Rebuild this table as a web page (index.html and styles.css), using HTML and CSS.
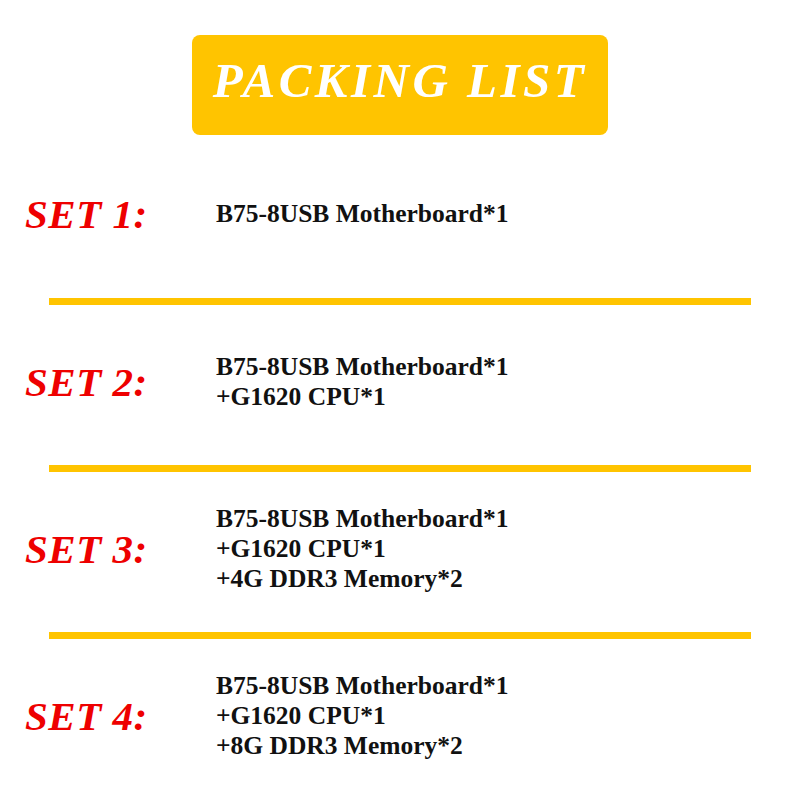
FILE: index.html
```html
<!DOCTYPE html>
<html>
<head>
<meta charset="utf-8">
<link rel="stylesheet" href="styles.css">
</head>
<body>
<div class="header">
  <div class="banner">PACKING LIST</div>
</div>
<div class="set set-first">
  <div class="label">SET 1:</div>
  <div class="items">
    <div>B75-8USB Motherboard*1</div>
  </div>
</div>
<div class="divider"></div>
<div class="set">
  <div class="label">SET 2:</div>
  <div class="items">
    <div>B75-8USB Motherboard*1</div>
    <div>+G1620 CPU*1</div>
  </div>
</div>
<div class="divider"></div>
<div class="set">
  <div class="label">SET 3:</div>
  <div class="items">
    <div>B75-8USB Motherboard*1</div>
    <div>+G1620 CPU*1</div>
    <div>+4G DDR3 Memory*2</div>
  </div>
</div>
<div class="divider"></div>
<div class="set set-last">
  <div class="label">SET 4:</div>
  <div class="items">
    <div>B75-8USB Motherboard*1</div>
    <div>+G1620 CPU*1</div>
    <div>+8G DDR3 Memory*2</div>
  </div>
</div>
</body>
</html>
```
FILE: styles.css
```css
html, body {
  margin: 0;
  padding: 0;
  background: #ffffff;
}
body {
  width: 800px;
  height: 800px;
  overflow: hidden;
  font-family: "Liberation Serif", "Times New Roman", serif;
}
.header {
  display: flex;
  justify-content: center;
  padding-top: 35px;
}
.banner {
  width: 416px;
  height: 100px;
  box-sizing: border-box;
  padding-bottom: 10px;
  border-radius: 8px;
  background: #ffc400;
  color: #ffffff;
  display: flex;
  align-items: center;
  justify-content: center;
  font-size: 49px;
  font-weight: bold;
  font-style: italic;
  letter-spacing: 3.5px;
  white-space: nowrap;
}
.set {
  display: flex;
  align-items: center;
  height: 160px;
  box-sizing: border-box;
  padding-left: 25px;
  padding-bottom: 7px;
}
.set-first {
  height: 163px;
  padding-bottom: 5px;
}
.set-last {
  height: 163px;
  padding-bottom: 10px;
}
.label {
  width: 191px;
  flex: none;
  color: #ee0000;
  font-size: 41px;
  font-weight: bold;
  font-style: italic;
  letter-spacing: 0.5px;
  white-space: nowrap;
}
.items {
  color: #111111;
  font-size: 25.5px;
  font-weight: bold;
  line-height: 30px;
  white-space: nowrap;
}
.divider {
  margin-left: 49px;
  width: 702px;
  height: 7px;
  background: #ffc400;
}
```
